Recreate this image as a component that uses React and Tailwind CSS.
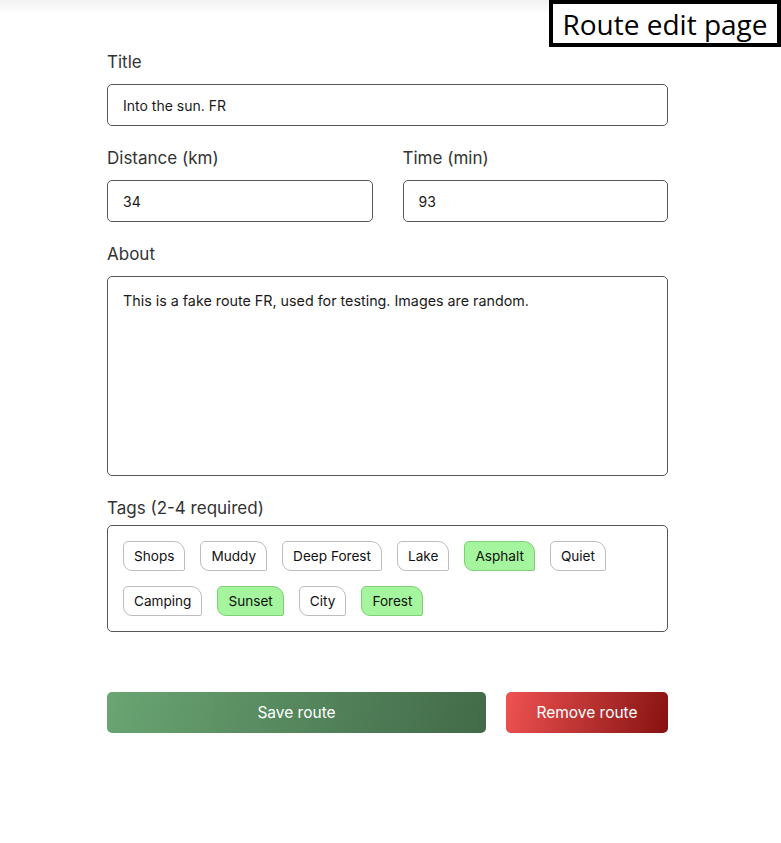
import React from "react";

const tags = [
  ["Shops", false],
  ["Muddy", false],
  ["Deep Forest", false],
  ["Lake", false],
  ["Asphalt", true],
  ["Quiet", false],
  ["Camping", false],
  ["Sunset", true],
  ["City", false],
  ["Forest", true],
];

function Label({ children, className = "" }) {
  return (
    <div className={"text-[17px] leading-[24px] text-[#333] " + className}>{children}</div>
  );
}

function Field({ value }) {
  return (
    <div className="h-[42px] w-full rounded-[5px] border border-[#555] px-[15px] flex items-center text-[14px] text-[#1a1a1a]">
      {value}
    </div>
  );
}

export default function App() {
  return (
    <div className="relative min-h-[843px] w-[781px] bg-white font-['Inter',sans-serif]">
      <div className="h-[14px] bg-gradient-to-b from-[#f1f1f1] to-white" />
      <div className="absolute right-0 top-0 h-[47px] w-[232px] border-[4px] border-black bg-white flex items-center justify-center text-[28px] text-black font-['Open_Sans',sans-serif] leading-none">
        Route edit page
      </div>
      <div className="ml-[107px] w-[561px] pt-[36px]">
        <Label className="mb-[10px]">Title</Label>
        <Field value="Into the sun. FR" />

        <div className="mt-[20px] grid grid-cols-2 gap-x-[30px]">
          <div>
            <Label className="mb-[10px]">Distance (km)</Label>
            <Field value="34" />
          </div>
          <div>
            <Label className="mb-[10px]">Time (min)</Label>
            <Field value="93" />
          </div>
        </div>

        <Label className="mt-[20px] mb-[10px]">About</Label>
        <div className="h-[200px] w-full rounded-[5px] border border-[#555] px-[15px] pt-[13px] text-[14.3px] text-[#1a1a1a]">
          This is a fake route FR, used for testing. Images are random.
        </div>

        <Label className="mt-[20px] mb-[5px]">Tags (2-4 required)</Label>
        <div className="w-full rounded-[5px] border border-[#555] p-[15px] flex flex-wrap gap-x-[15px] gap-y-[15px]">
          {tags.map(([t, on]) => (
            <div
              key={t}
              className={
                "h-[30px] px-[10px] flex items-center text-[13.6px] text-[#111] border rounded-tl-[5px] rounded-tr-[11px] rounded-bl-[9px] rounded-br-[2px] " +
                (on ? "bg-[#a4f59d] border-[#7fcf78]" : "bg-white border-[#bdbdbd]")
              }
            >
              {t}
            </div>
          ))}
        </div>

        <div className="mt-[60px] flex gap-[20px]">
          <button className="h-[41px] w-[379px] rounded-[5px] bg-linear-105 from-[#6aa573] to-[#426a48] text-white text-[15.5px]">
            Save route
          </button>
          <button className="h-[41px] flex-1 rounded-[5px] bg-linear-105 from-[#f05252] to-[#861010] text-white text-[15.5px]">
            Remove route
          </button>
        </div>
      </div>
    </div>
  );
}
